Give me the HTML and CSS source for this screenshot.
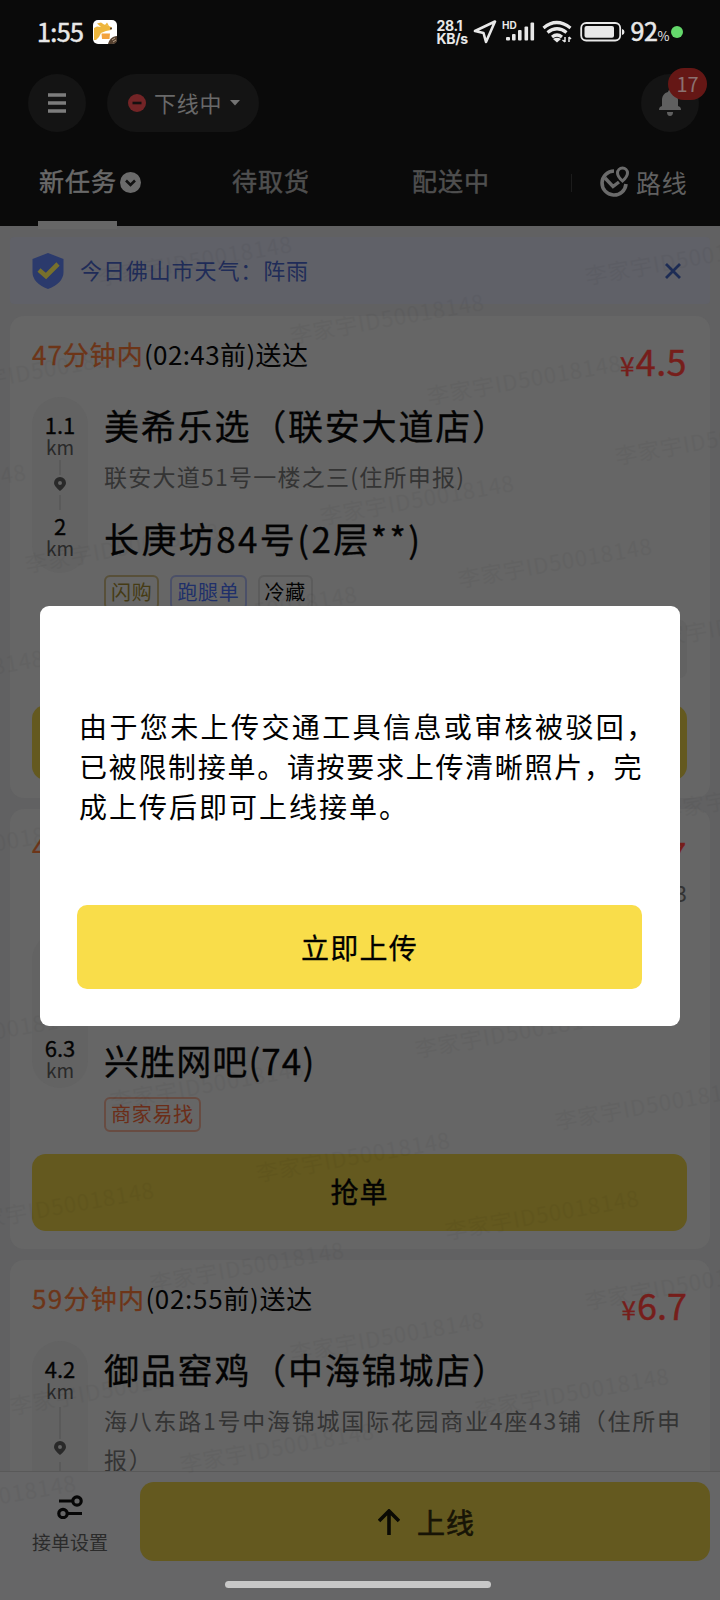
FILE: index.html
```html
<!DOCTYPE html>
<html lang="zh-CN">
<head>
<meta charset="utf-8">
<title>新任务</title>
<link rel="stylesheet" href="styles.css">
</head>
<body>
<div class="phone">
  <header class="header">
    <div class="status">
      <span class="clock">1:55</span>
      <svg class="app-icon" width="24" height="24" viewBox="0 0 24 24"><rect width="24" height="24" rx="5" fill="#fff"/><path d="M1 8 4 6.500 8 7 4 3.500l4-1 3 2 4 1 4 2-1 2.500-5 1-5 2-2 4-3 3H1z" fill="#eeb63c"/><path d="M8.500 13.500h8.500l-.5 5.500H9z" fill="#f3a23d"/><path d="m12 5 2-2.500L16 6z" fill="#eeb63c"/><circle cx="18" cy="8.500" r="1" fill="#433"/><path d="M15 24c1-4 4-8 9-8v4q0 4-5 4z" fill="#54402f"/><path d="m19 20 3-2m-2 4 3-2" stroke="#b9a18a"/></svg>
      <div class="status-right">
        <span class="speed">28.1<br>KB/s</span>
        <svg class="nav" width="24" height="24" viewBox="0 0 24 24" fill="none" stroke="#e8e8e8" stroke-width="2.6" stroke-linejoin="round"><path d="M22 1.500 13 22l-2.500-9L2 11z"/></svg>
        <svg class="signal" width="34" height="24" viewBox="0 0 34 24" fill="#e8e8e8"><text x="0" y="9" class="hd">HD</text><rect x="4" y="17" width="4" height="3.500" rx="1"/><rect x="10" y="14" width="3.600" height="6.500" rx="1"/><rect x="16" y="10" width="3.600" height="10.500" rx="1"/><rect x="22.500" y="6.500" width="3.600" height="14" rx="1"/><rect x="28.500" y="2.500" width="3.600" height="18" rx="1"/></svg>
        <svg class="wifi" width="30" height="24" viewBox="0 0 30 24" fill="none" stroke="#e8e8e8" stroke-width="3.200"><path d="M1.500 8q13-11 27 0M5.500 12.500q9.500-7.500 19 0M10 17q5-4 10 0"/><path d="M11 19q4-2.500 8 0l-4 3.500z" fill="#e8e8e8" stroke="none"/><path d="M23 17v5m-2.500-2L23 22m4 0v-5m0 0 2 2" stroke-width="1.500"/></svg>
        <svg class="battery" width="46" height="22" viewBox="0 0 46 22"><rect x="1.200" y="2" width="39" height="17.500" rx="5" fill="none" stroke="#e8e8e8" stroke-width="1.800"/><rect x="4.500" y="5" width="29.500" height="11.800" rx="2" fill="#e8e8e8"/><path d="M42 8q2.500.5 2.500 3T42 14z" fill="#e8e8e8"/></svg>
        <span class="percent">92<small>%</small></span><i class="dot"></i>
      </div>
    </div>
    <div class="actions">
      <span class="round"><svg width="18" height="20" viewBox="0 0 18 20" stroke="#7d7d7d" stroke-width="3.400"><path d="M0 2h18M0 10h18M0 18h18"/></svg></span>
      <span class="state">
        <svg width="18" height="18" viewBox="0 0 18 18"><circle cx="9" cy="9" r="9" fill="#732426"/><path d="M4.500 9h9" stroke="#151010" stroke-width="2.600"/></svg>
        <b>下线中</b>
        <svg width="10" height="6" viewBox="0 0 10 6"><path d="M0 0h10L5 5.500z" fill="#747474"/></svg>
      </span>
      <span class="round bell"><svg width="22" height="26" viewBox="0 0 22 26" fill="#606060"><path d="M11 0a2 2 0 0 1 2 2c4 1 6 4 6 8v6l2 1q1 1 1 3H0q0-2 1-3l2-1v-6c0-4 2-7 6-8a2 2 0 0 1 2-2zM8 22h6q0 4-3 4t-3-4z"/></svg><em class="badge">17</em></span>
    </div>
    <nav class="tabs">
      <span class="tab on">新任务<svg width="21" height="21" viewBox="0 0 21 21"><circle cx="10.500" cy="10.500" r="10.500" fill="#6b6b6b"/><path d="m6 8.500 4.500 4.500L15 8.500" fill="none" stroke="#111" stroke-width="2.600"/></svg></span>
      <span class="tab pick">待取货</span>
      <span class="tab deliver">配送中</span>
      <span class="route"><svg width="30" height="32" viewBox="0 0 30 32" fill="none" stroke="#6b6b6b"><path d="M14 5A12 12 0 1 0 26 18" stroke-width="3.600"/><path d="m5 12 8 8.500 6-4.500" stroke-width="3.400"/><path d="M22.500 15q-5-4.500-5-8a5 5 0 0 1 10 0q0 3.500-5 8z" stroke-width="3"/></svg>路线</span>
    </nav>
  </header>

  <main class="feed">
    <section class="notice">
      <svg width="32" height="36" viewBox="0 0 32 36"><path d="M16 0 31.500 6v13q0 11-15.500 17Q.500 30 .500 19V6z" fill="#2b3a6c"/><path d="m7 17 7 6L26 11" fill="none" stroke="#77702c" stroke-width="4.600"/></svg>
      <span>今日佛山市天气：阵雨</span>
      <svg class="close" width="16" height="16" viewBox="0 0 16 16" stroke="#1d2c55" stroke-width="2.800"><path d="m1 1 14 14M15 1 1 15"/></svg>
    </section>

    <section class="card first">
      <div class="head"><p class="due"><b>47分钟内</b>(02:43前)送达</p><p class="fee"><small>¥</small>4.5</p></div>
      <div class="trip">
        <div class="rail"><b>1.1</b><span>km</span><i></i><svg width="12" height="15" viewBox="0 0 12 15"><path d="M6 14Q0 9 0 6a6 6 0 0 1 12 0q0 3-6 8zM6 4a2 2 0 1 0 0 4 2 2 0 0 0 0-4z" fill="#292929" fill-rule="evenodd"/></svg><i></i><b>2</b><span>km</span></div>
        <div class="stops">
          <h2>美希乐选（联安大道店）</h2>
          <p class="addr">联安大道51号一楼之三(住所申报)</p>
          <h2 class="dest">长庚坊84号(2层**)</h2>
          <div class="tags"><span class="tag gold">闪购</span><span class="tag blue">跑腿单</span><span class="tag plain">冷藏</span></div>
        </div>
      </div>
      <div class="note"></div>
      <div class="grab"></div>
    </section>

    <section class="card second">
      <div class="head"><p class="due"><b>4</b></p><p class="fee">7</p></div>
      <p class="extra">3</p>
      <div class="trip">
        <div class="rail"><b>6.3</b><span>km</span></div>
        <div class="stops">
          <h2 class="tight">兴胜网吧(74)</h2>
          <div class="tags"><span class="tag red">商家易找</span></div>
        </div>
      </div>
      <div class="grab">抢单</div>
    </section>

    <section class="card third">
      <div class="head"><p class="due"><b>59分钟内</b>(02:55前)送达</p><p class="fee"><small>¥</small>6.7</p></div>
      <div class="trip">
        <div class="rail"><b>4.2</b><span>km</span><i class="long"></i><svg width="12" height="15" viewBox="0 0 12 15"><path d="M6 14Q0 9 0 6a6 6 0 0 1 12 0q0 3-6 8zM6 4a2 2 0 1 0 0 4 2 2 0 0 0 0-4z" fill="#292929" fill-rule="evenodd"/></svg><i class="long"></i></div>
        <div class="stops">
          <h2>御品窑鸡（中海锦城店）</h2>
          <p class="addr wide">海八东路1号中海锦城国际花园商业4座43铺（住所申报）</p>
        </div>
      </div>
    </section>
  </main>

  <footer class="footer">
    <div class="setup"><svg width="26" height="24" viewBox="0 0 26 24" fill="none" stroke="#060606" stroke-width="3.200"><path d="M2 6h13M11 18.500h14"/><circle cx="20" cy="6" r="4.200"/><circle cx="6" cy="18.500" r="4.200"/></svg><span>接单设置</span></div>
    <div class="online"><svg width="22" height="26" viewBox="0 0 22 26" fill="none" stroke="#0b0a04" stroke-width="3.600"><path d="M11 26V2M1 12 11 2l10 10"/></svg>上线</div>
    <i class="home"></i>
  </footer>

  <div class="marks" aria-hidden="true" id="marks"></div>

  <section class="modal" role="dialog">
    <p><span class="l1">由于您未上传交通工具信息或审核被驳回，</span><span class="l2">已被限制接单。请按要求上传清晰照片，完</span><span class="l3">成上传后即可上线接单。</span></p>
    <button class="upload">立即上传</button>
  </section>
</div>
<script src="marks.js"></script>
</body>
</html>
```

FILE: styles.css
```css
* { box-sizing: border-box; margin: 0; padding: 0; }
body { width: 720px; height: 1600px; overflow: hidden; font-family: "Noto Sans CJK SC", sans-serif; }
b, em, i, h2 { font-weight: 400; font-style: normal; }
svg { display: block; flex: none; }
.phone { position: relative; width: 720px; height: 1600px; overflow: hidden; background: #616162; display: flex; flex-direction: column; color: #030303; }

.header { height: 226px; flex: none; background: #0a0a0a; }
.status { height: 64px; padding: 0 37px 0 37px; display: flex; align-items: center; color: #e8e8e8; }
.clock { width: 56px; padding-bottom: 3px; font: 400 25px/30px "Noto Sans CJK SC"; letter-spacing: -.6px; -webkit-text-stroke: .6px; white-space: nowrap; }
.status-right { margin-left: auto; display: flex; align-items: center; }
.speed { width: 37px; font: 700 14px/13px Inter, sans-serif; letter-spacing: -.3px; white-space: nowrap; }
.hd { font: 700 10px Inter, sans-serif; }
.signal { margin-left: 5px; }
.wifi { margin-left: 6px; }
.battery { margin-left: 8px; }
.percent { margin-left: 4px; padding-top: 2px; font: 400 25px/30px "Noto Sans CJK SC"; letter-spacing: -.4px; -webkit-text-stroke: .6px; white-space: nowrap; }
.percent small { font-size: 13px; -webkit-text-stroke: 0; }
.dot { width: 12px; height: 12px; margin-left: 2px; border-radius: 50%; background: #64d86b; }

.actions { height: 78px; padding: 10px 21px 0 28px; display: flex; align-items: flex-start; }
.round { width: 58px; height: 58px; border-radius: 50%; background: #141414; display: flex; align-items: center; justify-content: center; }
.state { width: 152px; height: 58px; margin-left: 21px; padding-left: 21px; border-radius: 29px; background: #141414; display: flex; align-items: center; gap: 8px; color: #696969; }
.state b { font-size: 22px; letter-spacing: .7px; padding-bottom: 2px; }
.bell { position: relative; margin-left: auto; }
.badge { position: absolute; left: 27px; top: -6px; width: 39px; height: 32px; border-radius: 16px; background: #651715; color: #8b7170; font-size: 20px; line-height: 31px; text-align: center; }
.tabs { height: 84px; padding-left: 38px; display: flex; align-items: flex-start; font-size: 25px; line-height: 80px; color: #4f4f4f; -webkit-text-stroke: .5px; }
.tab { letter-spacing: 1px; }
.on { height: 85px; width: 103px; padding-left: 1px; display: flex; align-items: center; color: #696969; position: relative; white-space: nowrap; line-height: 74px; padding-bottom: 9px; }
.on svg { margin: 5px 0 0 3px; }
.on::after { content: ""; position: absolute; left: 0; top: 79px; width: 79px; height: 8px; background: #666; }
.pick { margin-left: 91px; line-height: 77px; }
.deliver { margin-left: 102px; line-height: 77px; }
.route { margin-left: 110px; display: flex; align-items: center; gap: 6px; color: #606060; -webkit-text-stroke: 0; position: relative; line-height: 80px; letter-spacing: .8px; white-space: nowrap; }
.route::before { content: ""; position: absolute; left: -29px; top: 32px; width: 1px; height: 18px; background: #1c1c1c; }

.feed { height: 1245px; flex: none; overflow: hidden; padding: 11px 10px 0; }
.notice { height: 67px; padding: 0 40px 0 22px; background: #606168; display: flex; align-items: center; border-radius: 4px; color: #1f2c58; font-size: 22px; letter-spacing: .9px; }
.notice span { margin-left: 16px; padding-bottom: 4px; }
.close { margin-left: auto; margin-right: -11px; }
.card { background: #666; border-radius: 14px; padding: 0 23px 0 22px; position: relative; }
.first { height: 482px; margin-top: 12px; }
.second { height: 440px; margin-top: 11px; }
.third { height: 400px; margin-top: 11px; }
.head { height: 81px; display: flex; justify-content: space-between; }
.due { font-size: 26px; line-height: 76px; letter-spacing: .4px; white-space: nowrap; }
.due b { color: #6d3518; letter-spacing: 1px; -webkit-text-stroke: .3px; }
.third .due { letter-spacing: .7px; }
.third .due b { letter-spacing: 1.300px; }
.fee { font-size: 36px; line-height: 88px; letter-spacing: .4px; color: #761e1b; -webkit-text-stroke: .4px; }
.fee small { font-size: 26px; margin-right: 1px; }
.trip { display: flex; gap: 16px; }
.rail { width: 56px; border-radius: 28px; background: #636363; display: flex; flex-direction: column; align-items: center; padding-top: 14px; height: 176px; flex: none; }
.rail b { font-size: 22px; line-height: 26px; -webkit-text-stroke: .3px; }
.rail span { font-size: 19px; line-height: 20px; color: #292929; }
.rail i { width: 2px; height: 15px; background: #5a5a5a; margin: 3px 0 2px; }
.rail i.long { height: 32px; margin: 6px 0 2px; }
.stops { flex: 1; min-width: 0; }
.stops h2 { font-size: 35px; line-height: 56px; letter-spacing: 1.800px; white-space: nowrap; -webkit-text-stroke: .3px; }
.stops .tight { letter-spacing: 1.100px; }
.addr { font-size: 23px; line-height: 39px; letter-spacing: 1.250px; color: #343434; padding-top: 4px; }
.wide { letter-spacing: 1.750px; margin-right: -8px; }
.stops .dest { margin-top: 14px; letter-spacing: 2.400px; }
.tags { display: flex; gap: 11px; margin-top: 9px; }
.tag { height: 35px; border: 2px solid; border-radius: 6px; padding: 0 5px; font-size: 20px; line-height: 29px; letter-spacing: .7px; white-space: nowrap; }
.gold { color: #453b14; border-color: #585039; }
.blue { color: #20306a; border-color: #4b5068; }
.plain { border-color: #5c5c5c; }
.red { color: #6b2d18; border-color: #684c42; }
.grab { position: absolute; left: 22px; right: 23px; top: 389px; height: 75px; border-radius: 14px; background: #64591f; text-align: center; font-size: 28px; line-height: 75px; letter-spacing: 1px; -webkit-text-stroke: .4px; }
.second .grab { top: 345px; height: 77px; }
.note { position: absolute; left: 400px; right: 23px; top: 304px; height: 58px; border-radius: 8px; background: #626262; }
.extra { position: absolute; right: 23px; top: 67px; font-size: 22px; line-height: 32px; color: #333; }
.second .trip { padding-top: 42px; }
.second .rail { height: 156px; padding-top: 102px; }
.second .stops { padding-top: 100px; }
.third .rail { height: 220px; }
.third .fee { letter-spacing: 0; }

.footer { height: 129px; flex: none; position: relative; border-top: 1px solid #595959; background: #666667; display: flex; padding: 10px 10px 0 0; }
.setup { width: 140px; display: flex; flex-direction: column; align-items: center; padding-top: 13px; font-size: 19px; line-height: 28px; color: #2b2b2b; }
.setup span { margin-top: 9px; }
.online { width: 570px; height: 79px; border-radius: 14px; background: #64591f; display: flex; align-items: center; justify-content: center; gap: 17px; padding-left: 3px; font-size: 28px; line-height: 40px; letter-spacing: 1px; color: #171406; -webkit-text-stroke: .6px; }
.home { position: absolute; left: 225px; top: 109px; width: 266px; height: 7px; border-radius: 4px; background: #c8c8c8; }

.marks { position: absolute; inset: 0; overflow: hidden; pointer-events: none; }
.marks span { position: absolute; font-size: 22px; line-height: 30px; letter-spacing: .9px; color: #000; opacity: .03; transform: rotate(-10deg); transform-origin: 0 50%; white-space: nowrap; }

.modal { position: absolute; z-index: 5; left: 40px; top: 606px; width: 639.500px; height: 419.500px; padding: 99.500px 37px 0; border-radius: 9px; background: #fff; color: #000; }
.modal p { height: 199.500px; font-size: 28px; line-height: 40px; padding-left: 2px; }
.modal p span { display: block; white-space: nowrap; }
.l1 { letter-spacing: 2.400px; }
.l2 { letter-spacing: 1.700px; }
.l3 { letter-spacing: 2px; }
.upload { display: block; width: 565px; height: 84px; border: 0; border-radius: 10px; background: #f9dd4a; font: 28px/84px "Noto Sans CJK SC", sans-serif; letter-spacing: 1.200px; color: #000; -webkit-text-stroke: .3px; }
```

FILE: marks.js
```js
// Left end of each repeated watermark line.
const marks = [
  [98, 276], [290, 334], [427, 395], [585, 275], [615, 455], [320, 515], [458, 578], [25, 563],
  [-60, 386], [-168, 504], [-150, 690], [163, 626], [640, 640], [-110, 860], [660, 810],
  [415, 1048], [110, 1100], [555, 1120], [256, 1172], [-40, 1222], [445, 1230], [150, 1282],
  [585, 1300], [290, 1352], [475, 1408], [10, 1405], [180, 1463], [-118, 1515], [-110, 1048]
];
const layer = document.getElementById("marks");
for (const [x, y] of marks) {
  const s = document.createElement("span");
  s.textContent = "李家宇ID50018148";
  s.style.left = x + "px";
  s.style.top = (y - 15) + "px";
  layer.append(s);
}
```
